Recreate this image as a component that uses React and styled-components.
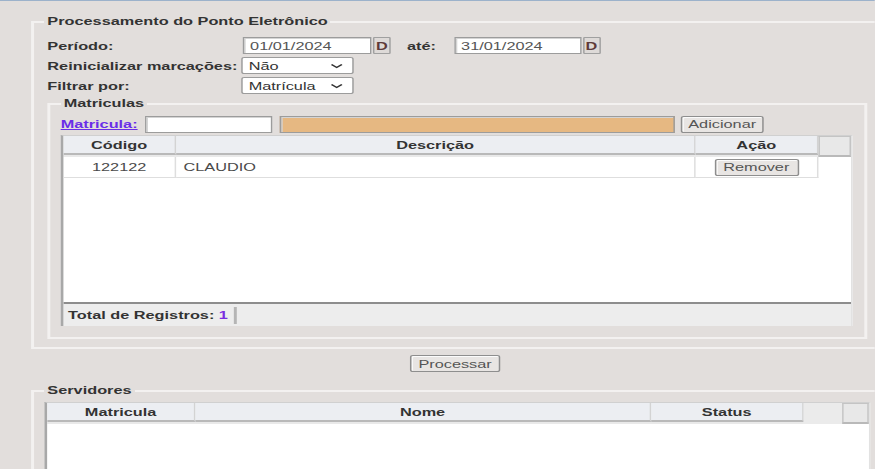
import styled, { createGlobalStyle } from 'styled-components'

const GlobalStyle = createGlobalStyle`
  html, body {
    margin: 0;
    padding: 0;
    background: #e2dedc;
    overflow: hidden;
  }
  body {
    font-family: "Liberation Sans", Arial, sans-serif;
    font-size: 11px;
    color: #333;
  }
`

// the old page is drawn stretched sideways, so the whole sheet is scaled on x
const Page = styled.div`
  width: 591px;
  height: 469px;
  box-sizing: border-box;
  overflow: hidden;
  border-top: 1px solid #9cb2cb;
  padding: 14px 0 0 21px;
  transform: scaleX(1.48);
  transform-origin: 0 0;
`

const Fieldset = styled.fieldset`
  margin: ${p => p.$margin || '0'};
  padding: ${p => p.$pad || '9px 7px 8px'};
  border: 2px solid #f3f1f0;
  width: ${p => p.$width}px;
  box-sizing: border-box;
  min-width: 0;
`

const Legend = styled.legend`
  padding: 0 2px;
  font-weight: bold;
  font-size: 11px;
  line-height: 13px;
  color: #333;
`

const FormRow = styled.div`
  display: flex;
  align-items: center;
  height: 17px;
  margin-bottom: 3px;
  padding-left: 2px;
`

const Label = styled.span`
  display: inline-block;
  width: ${p => (p.$w ? `${p.$w}px` : 'auto')};
  margin: ${p => p.$margin || '0'};
  font-weight: bold;
  color: #333;
  white-space: nowrap;
`

const TextInput = styled.div`
  width: ${p => p.$w}px;
  height: 17px;
  box-sizing: border-box;
  margin: ${p => p.$margin || '0'};
  padding: 0 4px;
  display: flex;
  align-items: center;
  background: ${p => p.$bg || '#fff'};
  border: 1px solid #9c9c9c;
  box-shadow: inset 1px 1px 0 #d4d4d4;
  color: #555;
  white-space: nowrap;
`

const DButton = styled.button`
  width: 12px;
  height: 17px;
  margin-left: 1px;
  padding: 0;
  font-family: inherit;
  font-size: 11px;
  font-weight: bold;
  color: #5e3a3a;
  background: #dedad8;
  border: 1px solid #a0a0a0;
  border-radius: 1px;
`

const Select = styled.div`
  width: 76px;
  height: 17px;
  box-sizing: border-box;
  padding: 0 6px 0 4px;
  display: flex;
  align-items: center;
  justify-content: space-between;
  background: #fff;
  border: 1px solid #9c9c9c;
  border-radius: 2px;
  color: #333;
`

const Button = styled.button`
  width: ${p => p.$w}px;
  height: 17px;
  margin: ${p => p.$margin || '0'};
  padding: 0;
  font-family: inherit;
  font-size: 11px;
  color: #555;
  background: #e8e5e3;
  border: 1px solid #8e8e8e;
  border-radius: 2px;
  box-shadow: inset 1px 1px 0 #fbfbfb;
`

const SearchRow = styled.div`
  display: flex;
  align-items: center;
  height: 18px;
  margin-bottom: 2px;
`

const Link = styled.a`
  font-weight: bold;
  color: #6a2ee8;
  text-decoration: underline;
  margin-right: 5px;
  white-space: nowrap;
`

const Grid = styled.div`
  width: ${p => p.$w}px;
  box-sizing: border-box;
  background: #fff;
  border-left: 2px solid #a8a8a8;
  border-top: 1px solid #d0d0d0;
  border-right: 1px solid #e2e2e2;
`

const HeadRow = styled.div`
  display: flex;
  background: #e9e9e9;
`

const HeadCell = styled.div`
  width: ${p => p.$w}px;
  height: 19px;
  flex: none;
  box-sizing: border-box;
  display: flex;
  align-items: center;
  justify-content: center;
  background: #eceef2;
  border-right: 1px solid #d3d3d3;
  border-bottom: 2px solid #b9b9b9;
  font-weight: bold;
  color: #333;
`

const HeadGap = styled.div`
  width: ${p => p.$w}px;
  flex: none;
  background: #ebebeb;
`

const ScrollHead = styled.div`
  width: ${p => p.$w}px;
  height: 21px;
  flex: none;
  box-sizing: border-box;
  background: #e8e8e8;
  border: 1px solid #c4c4c4;
  border-bottom: 2px solid #b9b9b9;
`

const Body = styled.div`
  height: ${p => p.$h}px;
  background: #fff;
`

const Row = styled.div`
  display: flex;
  height: 21px;
`

const Cell = styled.div`
  width: ${p => p.$w}px;
  flex: none;
  box-sizing: border-box;
  display: flex;
  align-items: center;
  justify-content: ${p => p.$align || 'flex-start'};
  padding: ${p => (p.$align ? '0' : '0 5px')};
  border-right: 1px solid #dedede;
  border-bottom: 1px solid #dedede;
  color: #4a4a4a;
`

const Footer = styled.div`
  height: 22px;
  display: flex;
  align-items: center;
  padding-left: 3px;
  background: #ededed;
  border-top: 2px solid #8d8d8d;
  font-weight: bold;
  color: #333;
`

const Count = styled.span`
  color: #7a2ee0;
`

const FooterSep = styled.span`
  width: 2px;
  height: 17px;
  margin-left: 4px;
  background: #b5b5b5;
`

const ButtonBar = styled.div`
  width: 573px;
  display: flex;
  justify-content: center;
  margin-top: 6px;
`

const Chevron = () => (
  <svg width='9' height='6' viewBox='0 0 9 6'>
    <path d='M1 1.5 L4.5 4.5 L8 1.5' fill='none' stroke='#333' strokeWidth='1.3' />
  </svg>
)

const App = () => {
  return (
    <>
      <GlobalStyle />
      <Page>
        <Fieldset $width={620}>
          <Legend>Processamento do Ponto Eletrônico</Legend>
          <FormRow>
            <Label $w={132}>Período:</Label>
            <TextInput $w={87}>01/01/2024</TextInput>
            <DButton>D</DButton>
            <Label $margin='0 12px 0 11px'>até:</Label>
            <TextInput $w={86}>31/01/2024</TextInput>
            <DButton>D</DButton>
          </FormRow>
          <FormRow>
            <Label $w={131}>Reinicializar marcações:</Label>
            <Select>Não<Chevron /></Select>
          </FormRow>
          <FormRow>
            <Label $w={131}>Filtrar por:</Label>
            <Select>Matrícula<Chevron /></Select>
          </FormRow>

          <Fieldset $width={554} $margin='1px 0 0 2px' $pad='5px 7px 11px'>
            <Legend>Matriculas</Legend>
            <SearchRow>
              <Link>Matricula:</Link>
              <TextInput $w={86} />
              <TextInput $w={267} $bg='#e6b882' $margin='0 0 0 5px' />
              <Button $w={56} $margin='0 0 0 4px'>Adicionar</Button>
            </SearchRow>
            <Grid $w={535}>
              <HeadRow>
                <HeadCell $w={76}>Código</HeadCell>
                <HeadCell $w={351}>Descrição</HeadCell>
                <HeadCell $w={83}>Ação</HeadCell>
                <ScrollHead $w={22} />
              </HeadRow>
              <Body $h={145}>
                <Row>
                  <Cell $w={76} $align='center'>122122</Cell>
                  <Cell $w={351}>CLAUDIO</Cell>
                  <Cell $w={83} $align='center'>
                    <Button $w={57}>Remover</Button>
                  </Cell>
                </Row>
              </Body>
              <Footer>
                Total de Registros:&nbsp;<Count>1</Count>
                <FooterSep />
              </Footer>
            </Grid>
          </Fieldset>
        </Fieldset>

        <ButtonBar>
          <Button $w={61}>Processar</Button>
        </ButtonBar>

        <Fieldset $width={620} $margin='12px 0 0' $pad='5px 7px 0'>
          <Legend>Servidores</Legend>
          <Grid $w={558}>
            <HeadRow>
              <HeadCell $w={100}>Matricula</HeadCell>
              <HeadCell $w={308}>Nome</HeadCell>
              <HeadCell $w={103}>Status</HeadCell>
              <HeadGap $w={26} />
              <ScrollHead $w={18} />
            </HeadRow>
            <Body $h={80} />
          </Grid>
        </Fieldset>
      </Page>
    </>
  )
}

export default App
